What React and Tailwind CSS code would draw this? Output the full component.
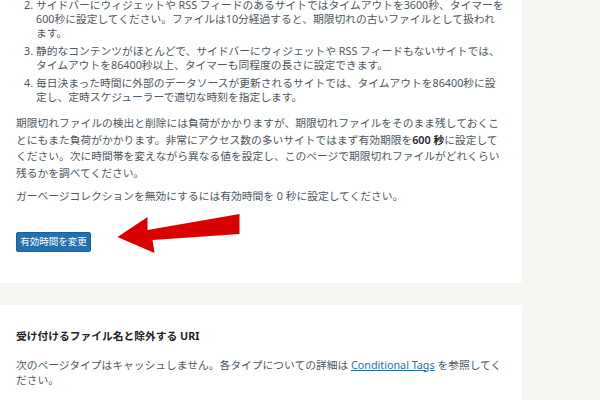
import React from "react";

const font = { fontFamily: '"Noto Sans", "Noto Sans CJK JP", sans-serif' };

export default function App() {
  return (
    <div
      className="w-[600px] h-[400px] overflow-hidden bg-[#f6f7f3] text-[10.75px] text-[#50575e]"
      style={font}
    >
      <div className="w-[522px] bg-white rounded-br-[3px] pl-4 pr-4 pb-[31px]">
        <ol className="pl-[20px] mt-[-2px] leading-[14px] whitespace-nowrap">
          <li className="mb-[4px] flex">
            <span className="w-[12px] shrink-0 -ml-[12px] mr-0">2.</span>
            <span>
              サイドバーにウィジェットや RSS フィードのあるサイトではタイムアウトを3600秒、タイマーを<br />
              600秒に設定してください。ファイルは10分経過すると、期限切れの古いファイルとして扱われ<br />
              ます。
            </span>
          </li>
          <li className="mb-[4px] flex">
            <span className="w-[12px] shrink-0 -ml-[12px]">3.</span>
            <span>
              静的なコンテンツがほとんどで、サイドバーにウィジェットや RSS フィードもないサイトでは、<br />
              タイムアウトを86400秒以上、タイマーも同程度の長さに設定できます。
            </span>
          </li>
          <li className="flex">
            <span className="w-[12px] shrink-0 -ml-[12px]">4.</span>
            <span>
              毎日決まった時間に外部のデータソースが更新されるサイトでは、タイムアウトを86400秒に設<br />
              定し、定時スケジューラーで適切な時刻を指定します。
            </span>
          </li>
        </ol>
        <p className="mt-[11px] leading-[16.7px] whitespace-nowrap">
          期限切れファイルの検出と削除には負荷がかかりますが、期限切れファイルをそのまま残しておくこ<br />
          とにもまた負荷がかかります。非常にアクセス数の多いサイトではまず有効期限を
          <b className="font-semibold text-[#1d2327]">600 秒</b>に設定して<br />
          ください。次に時間帯を変えながら異なる値を設定し、このページで期限切れファイルがどれくらい<br />
          残るかを調べてください。
        </p>
        <p className="mt-[6px] leading-[16.7px] whitespace-nowrap">
          ガーベージコレクションを無効にするには有効時間を 0 秒に設定してください。
        </p>
        <div className="relative mt-[27px] h-[20px]">
          <button className="h-[20px] w-[75px] rounded-[2px] bg-[#2271b1] border border-[#1b5f94] text-white text-[9.5px] leading-none flex items-center justify-center">
            有効時間を変更
          </button>
          <svg
            className="absolute left-[99px] top-[-18px]"
            width="130"
            height="44"
            viewBox="115 214 125 44"
          >
            <polygon
              points="115,237 145,217 145,230 237,214 237,234 150,240 152,253"
              fill="#d90000"
            />
          </svg>
        </div>
      </div>
      <div className="mt-[22px] w-[522px] bg-white rounded-tr-[3px] pl-4 pt-[23px] pb-6">
        <h3 className="font-bold text-[#1d2327] leading-[16px] text-[10.75px]">
          受け付けるファイル名と除外する URI
        </h3>
        <p className="mt-[14px] leading-[15.3px] whitespace-nowrap">
          次のページタイプはキャッシュしません。各タイプについての詳細は{" "}
          <a className="text-[#2271b1] underline">Conditional Tags</a> を参照してく<br />
          ださい。
        </p>
      </div>
    </div>
  );
}
